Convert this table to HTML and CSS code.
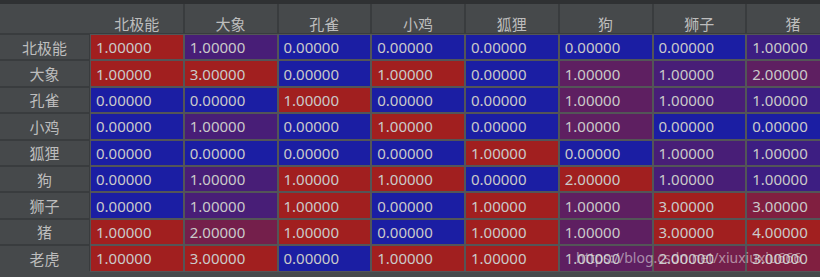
FILE: index.html
```html
<!DOCTYPE html>
<html lang="zh">
<head>
<meta charset="utf-8">
<title>相关矩阵</title>
<link rel="stylesheet" href="styles.css">
</head>
<body>
<div class="view">
  <div class="topbar"></div>
  <div class="grid">
    <div class="corner"></div>
    <div class="hd">北极能</div><div class="hd">大象</div><div class="hd">孔雀</div><div class="hd">小鸡</div><div class="hd">狐狸</div><div class="hd">狗</div><div class="hd">狮子</div><div class="hd">猪</div>

    <div class="rh">北极能</div>
    <div class="c t100">1.00000</div><div class="c t33">1.00000</div><div class="c t0">0.00000</div><div class="c t0">0.00000</div><div class="c t0">0.00000</div><div class="c t0">0.00000</div><div class="c t0">0.00000</div><div class="c t25">1.00000</div>

    <div class="rh">大象</div>
    <div class="c t100">1.00000</div><div class="c t100">3.00000</div><div class="c t0">0.00000</div><div class="c t100">1.00000</div><div class="c t0">0.00000</div><div class="c t50">1.00000</div><div class="c t33">1.00000</div><div class="c t50">2.00000</div>

    <div class="rh">孔雀</div>
    <div class="c t0">0.00000</div><div class="c t0">0.00000</div><div class="c t100">1.00000</div><div class="c t0">0.00000</div><div class="c t0">0.00000</div><div class="c t50">1.00000</div><div class="c t33">1.00000</div><div class="c t25">1.00000</div>

    <div class="rh">小鸡</div>
    <div class="c t0">0.00000</div><div class="c t33">1.00000</div><div class="c t0">0.00000</div><div class="c t100">1.00000</div><div class="c t0">0.00000</div><div class="c t50">1.00000</div><div class="c t0">0.00000</div><div class="c t0">0.00000</div>

    <div class="rh">狐狸</div>
    <div class="c t0">0.00000</div><div class="c t0">0.00000</div><div class="c t0">0.00000</div><div class="c t0">0.00000</div><div class="c t100">1.00000</div><div class="c t0">0.00000</div><div class="c t33">1.00000</div><div class="c t25">1.00000</div>

    <div class="rh">狗</div>
    <div class="c t0">0.00000</div><div class="c t33">1.00000</div><div class="c t100">1.00000</div><div class="c t100">1.00000</div><div class="c t0">0.00000</div><div class="c t100">2.00000</div><div class="c t33">1.00000</div><div class="c t25">1.00000</div>

    <div class="rh">狮子</div>
    <div class="c t0">0.00000</div><div class="c t33">1.00000</div><div class="c t100">1.00000</div><div class="c t0">0.00000</div><div class="c t100">1.00000</div><div class="c t50">1.00000</div><div class="c t100">3.00000</div><div class="c t75">3.00000</div>

    <div class="rh">猪</div>
    <div class="c t100">1.00000</div><div class="c t67">2.00000</div><div class="c t100">1.00000</div><div class="c t0">0.00000</div><div class="c t100">1.00000</div><div class="c t50">1.00000</div><div class="c t100">3.00000</div><div class="c t100">4.00000</div>

    <div class="rh">老虎</div>
    <div class="c t100">1.00000</div><div class="c t100">3.00000</div><div class="c t0">0.00000</div><div class="c t100">1.00000</div><div class="c t100">1.00000</div><div class="c t50">1.00000</div><div class="c t67">2.00000</div><div class="c t75">3.00000</div>
  </div>
  <div class="watermark">https://blog.csdn.net/xiuxiuxiu666</div>
</div>
</body>
</html>
```

FILE: styles.css
```css
html, body {
  margin: 0;
  padding: 0;
  overflow: hidden;
  background: #46494b;
}

.view {
  position: relative;
  width: 820px;
  height: 277px;
  overflow: hidden;
  font-family: "Noto Sans", "Noto Sans CJK SC", sans-serif;
  font-size: 15px;
}

.topbar {
  height: 4px;
  background: #2f3133;
}

.grid {
  display: grid;
  grid-template-columns: 89px repeat(8, 91.75px);
  grid-template-rows: 29px repeat(9, 24.4px);
  gap: 2px;
  background: #393c3e;
  width: max-content;
}

.corner {
  background: #46494b;
  box-shadow: 2px 0 0 #46494b;
}

.hd {
  background: #46494b;
  color: #bdbdbd;
  display: flex;
  align-items: flex-end;
  justify-content: center;
  line-height: 18px;
}

.rh {
  background: #46494b;
  color: #bdbdbd;
  display: flex;
  align-items: center;
  justify-content: center;
}

.c {
  color: #cacaca;
  display: flex;
  align-items: center;
  padding-left: 5px;
  outline: 1px solid #535557;
}

.t0 { background: #1b1ea3; }
.t25 { background: #3d1e82; }
.t33 { background: #481e77; }
.t50 { background: #5e1f61; }
.t67 { background: #741f4b; }
.t75 { background: #801f40; }
.t100 { background: #a11f1f; }

.watermark {
  position: absolute;
  left: 576px;
  top: 248px;
  color: rgba(235, 235, 235, 0.55);
  font-size: 14px;
  white-space: nowrap;
}
```
